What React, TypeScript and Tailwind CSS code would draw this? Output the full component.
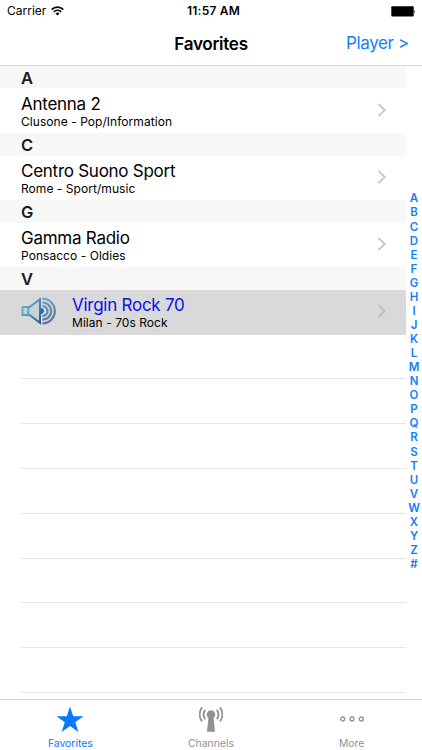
import React from 'react';

const stations = [
  { letter: 'A', name: 'Antenna 2', info: 'Clusone - Pop/Information' },
  { letter: 'C', name: 'Centro Suono Sport', info: 'Rome - Sport/music' },
  { letter: 'G', name: 'Gamma Radio', info: 'Ponsacco - Oldies' },
  { letter: 'V', name: 'Virgin Rock 70', info: 'Milan - 70s Rock', playing: true },
];

const indexLetters = 'ABCDEFGHIJKLMNOPQRSTUVWXYZ#'.split('');
const emptyRows = [0, 1, 2, 3, 4, 5, 6, 7];

function Chevron({ dim }: { dim?: boolean }) {
  return (
    <svg className="mb-[2px]" width="10" height="16" viewBox="0 0 10 16" fill="none" stroke={dim ? '#bdbdc0' : '#c5c5ca'} strokeWidth="1.8">
      <path d="M1.4 1.9 7.8 8 1.4 14.1" />
    </svg>
  );
}

function Speaker() {
  return (
    <svg width="36" height="28" viewBox="0 0 36 28" fill="none">
      <defs>
        <linearGradient id="metal" x1="0" y1="0" x2="1" y2="1">
          <stop offset="0" stopColor="#71c3d2" />
          <stop offset="1" stopColor="#315a91" />
        </linearGradient>
        <linearGradient id="wave" x1="0" y1="0" x2="0" y2="1">
          <stop offset="0" stopColor="#74a0b7" />
          <stop offset="1" stopColor="#5472a0" />
        </linearGradient>
      </defs>
      <path d="M1.5 10H8.5L19 2.2V25.8L8.5 18H1.5Z" fill="#c5d3d9" stroke="url(#metal)" strokeWidth="2" />
      <path d="M7.3 10V18" stroke="#58a5bb" strokeWidth="1.8" />
      <path d="M20 11.5a2.5 2.5 0 0 1 0 5Z" fill="#1c6fba" stroke="#1c6fba" />
      <path d="M21.5 9a5 5 0 0 1 0 10M21.5 5.3a8.7 8.7 0 0 1 0 17.4M21.5 1.7a12.3 12.3 0 0 1 0 24.6" stroke="url(#wave)" strokeWidth="2.3" />
    </svg>
  );
}

function Antenna() {
  return (
    <svg width="24" height="27" viewBox="0 0 24 27" fill="none" stroke="#929292" strokeWidth="1.9">
      <path d="M12 4.3a4.4 4.4 0 0 1 2.6 7.8L16 25.8H8L9.4 12.1A4.4 4.4 0 0 1 12 4.3Z" fill="#929292" stroke="none" />
      <path d="M6.2 3.7a8 8 0 0 0 0 9.4M17.8 3.7a8 8 0 0 1 0 9.4M3 1.4a12 12 0 0 0 0 14M21 1.4a12 12 0 0 1 0 14" />
    </svg>
  );
}

export default function App() {
  return (
    <div className="relative flex h-[750px] w-[422px] flex-col overflow-hidden bg-white font-['Inter','Liberation_Sans',sans-serif] text-black">
      <header className="flex h-[66px] shrink-0 flex-col border-b border-[#d9d9da]">
        <div className="grid h-[22px] grid-cols-3 items-center pl-[7px] pr-[6px] text-[12px]">
          <div className="flex items-center gap-[5px]">
            <span>Carrier</span>
            <svg width="13" height="10" viewBox="0 0 13 10" fill="none" stroke="#000" strokeWidth="1.7">
              <path d="M.7 3.6a8.2 8.2 0 0 1 11.6 0M2.8 5.8a5.2 5.2 0 0 1 7.4 0" />
              <path d="M4.5 7.5a2.8 2.8 0 0 1 4 0l-2 2Z" fill="#000" stroke="none" />
            </svg>
          </div>
          <span className="pl-[4px] text-center font-semibold tracking-[0.2px] whitespace-nowrap">11:57 AM</span>
          <svg className="justify-self-end" width="25" height="11" viewBox="0 0 25 11">
            <rect x="0.3" y="0.3" width="22.4" height="10.2" rx="1" />
            <path d="M23.4 3.7q1.5 1.7 0 3.5Z" />
          </svg>
        </div>
        <div className="grid h-[43px] grid-cols-3 items-center px-[13px]">
          <span />
          <h1 className="text-center text-[17.1px] font-semibold tracking-[-0.3px]">Favorites</h1>
          <span className="justify-self-end text-[17px] tracking-[-0.35px] whitespace-nowrap text-[#157efb]">Player &gt;</span>
        </div>
      </header>

      <main className="flex h-[633px] shrink-0">
        <div className="w-[406px] shrink-0 overflow-hidden">
          {stations.map((s) => (
            <section key={s.letter} className="h-[67.15px]">
              <h2 className="flex h-[22.4px] items-center bg-[#f7f7f7] pt-[2px] pl-[21px] text-[16.5px] font-semibold text-[#1c1c1e]">{s.letter}</h2>
              <div className={`flex h-[44.75px] items-center pr-[19px] pl-[21px] ${s.playing ? 'bg-[#d9d9d9]' : 'bg-white'}`}>
                {s.playing && <div className="w-[51px] pb-[3px]"><Speaker /></div>}
                <div className="flex-1 pt-px">
                  <p className={`text-[17px] leading-[20px] tracking-[-0.26px] whitespace-nowrap ${s.playing ? 'text-[#1010e8]' : ''}`}>{s.name}</p>
                  <p className="text-[12px] leading-[15.5px] tracking-[0.05px] whitespace-nowrap">{s.info}</p>
                </div>
                <Chevron dim={s.playing} />
              </div>
            </section>
          ))}
          {emptyRows.map((r) => (
            <div key={r} className="ml-[21px] h-[44.8px] border-b border-[#e6e6e8]" />
          ))}
        </div>
        <nav className="flex flex-1 flex-col items-center pt-[125.4px] text-[11.5px] font-semibold text-[#157efb]">
          {indexLetters.map((l) => (
            <span key={l} className="h-[14.07px] leading-[14.07px]">{l}</span>
          ))}
        </nav>
      </main>

      <footer className="grid h-[51px] grid-cols-3 border-t border-[#d5d5d6] text-[10.4px] text-[#929292]">
        <div className="flex flex-col items-center text-[#0879fb]">
          <div className="flex h-[38px] items-center pt-px">
            <svg width="28" height="27" viewBox="0 0 28 27" fill="currentColor"><path d="M14 .5l3.2 9.7h10.3l-8.3 6 3.2 9.8-8.4-6-8.4 6 3.2-9.8-8.3-6h10.3Z" /></svg>
          </div>
          <span className="leading-[12px]">Favorites</span>
        </div>
        <div className="flex flex-col items-center">
          <div className="flex h-[38px] items-center pt-px"><Antenna /></div>
          <span className="leading-[12px]">Channels</span>
        </div>
        <div className="flex flex-col items-center">
          <div className="flex h-[38px] items-center">
            <svg width="26" height="6" viewBox="0 0 26 6" fill="none" stroke="currentColor" strokeWidth="1.3"><circle cx="3.7" cy="3" r="2" /><circle cx="13" cy="3" r="2" /><circle cx="22.3" cy="3" r="2" /></svg>
          </div>
          <span className="leading-[12px]">More</span>
        </div>
      </footer>
    </div>
  );
}
